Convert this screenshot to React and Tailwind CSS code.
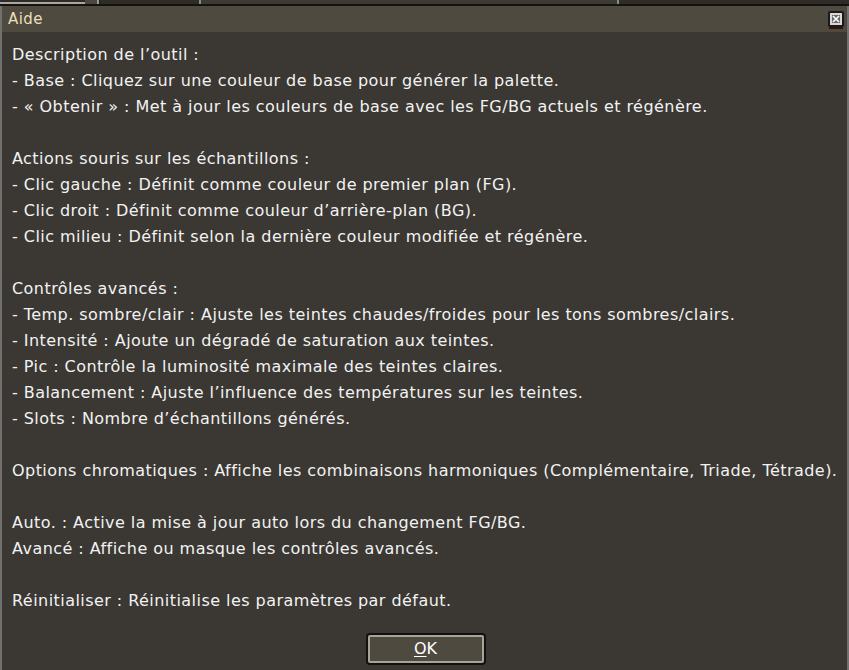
import React from "react";

const lines = [
  "Description de l’outil :",
  "- Base : Cliquez sur une couleur de base pour générer la palette.",
  "- « Obtenir » : Met à jour les couleurs de base avec les FG/BG actuels et régénère.",
  "",
  "Actions souris sur les échantillons :",
  "- Clic gauche : Définit comme couleur de premier plan (FG).",
  "- Clic droit : Définit comme couleur d’arrière-plan (BG).",
  "- Clic milieu : Définit selon la dernière couleur modifiée et régénère.",
  "",
  "Contrôles avancés :",
  "- Temp. sombre/clair : Ajuste les teintes chaudes/froides pour les tons sombres/clairs.",
  "- Intensité : Ajoute un dégradé de saturation aux teintes.",
  "- Pic : Contrôle la luminosité maximale des teintes claires.",
  "- Balancement : Ajuste l’influence des températures sur les teintes.",
  "- Slots : Nombre d’échantillons générés.",
  "",
  "Options chromatiques : Affiche les combinaisons harmoniques (Complémentaire, Triade, Tétrade).",
  "",
  "Auto. : Active la mise à jour auto lors du changement FG/BG.",
  "Avancé : Affiche ou masque les contrôles avancés.",
  "",
  "Réinitialiser : Réinitialise les paramètres par défaut.",
];

export default function App() {
  return (
    <div
      className="w-[849px] h-[670px] bg-[#3b3833] flex flex-col overflow-hidden"
      style={{ fontFamily: '"DejaVu Sans", sans-serif' }}
    >
      {/* background strip behind the dialog */}
      <div className="h-[4px] flex shrink-0">
        <div className="w-[85px] flex flex-col">
          <div className="h-[2px] bg-[#2e2b27]" />
          <div className="h-[2px] bg-[#a9a79f]" />
        </div>
        <div className="w-[12px] bg-[#4a4740]" />
        <div className="w-[2px] bg-[#9a9a98]" />
        <div className="w-[1px] bg-[#1e1c19]" />
        <div className="w-[99px] bg-[#2f2c28]" />
        <div className="w-[2px] bg-[#8a8a88]" />
        <div className="w-[416px] bg-[#3d3a35]" />
        <div className="w-[2px] bg-[#8a8a88]" />
        <div className="flex-1 bg-[#2f2c28]" />
      </div>
      <div className="h-[2px] bg-[#141312] shrink-0" />

      <div className="flex-1 flex flex-col border-l-2 border-r-2 border-[#727170] min-h-0">
        {/* title bar */}
        <div className="h-[26px] bg-[#4f4a3f] flex items-center justify-between pl-[6px] pr-[3px] shrink-0">
          <span className="text-[15px] text-[#eadfb8] leading-none tracking-[0.4px]">Aide</span>
          <div className="flex flex-col items-center mt-[2px]">
            <div className="w-[16px] h-[16px] bg-[#1a1a1a] p-[2px] rounded-[2px]">
              <div className="w-full h-full bg-[#d8d8d8] flex items-center justify-center">
                <svg width="8" height="8" viewBox="0 0 8 8">
                  <rect x="0" y="0" width="8" height="8" fill="#6a6a6a" />
                  <path d="M1 1 L7 7 M7 1 L1 7" stroke="#ffffff" strokeWidth="1.6" />
                </svg>
              </div>
            </div>
            <div className="w-[14px] h-[2px] bg-[#3a1208]" />
          </div>
        </div>

        {/* content */}
        <div className="flex-1 flex flex-col px-[10px] pt-[10px]">
          {lines.map((l, i) => (
            <div
              key={i}
              className="h-[26px] leading-[26px] text-[16px] tracking-[0.45px] text-[#f2f2f2] whitespace-nowrap"
            >
              {l || "\u00a0"}
            </div>
          ))}
          <div className="flex justify-center mt-[19px]">
            <div className="w-[120px] h-[32px] bg-[#111] rounded-[4px] p-[2px] ml-[2px]">
              <div className="w-full h-full rounded-[2px] bg-[#a9a595] p-[2px]">
                <div className="w-full h-full bg-[#4f4a3f] flex items-center justify-center">
                  <span className="text-[16px] text-white leading-none">
                    <span className="underline underline-offset-2">O</span>K
                  </span>
                </div>
              </div>
            </div>
          </div>
        </div>
      </div>
    </div>
  );
}
